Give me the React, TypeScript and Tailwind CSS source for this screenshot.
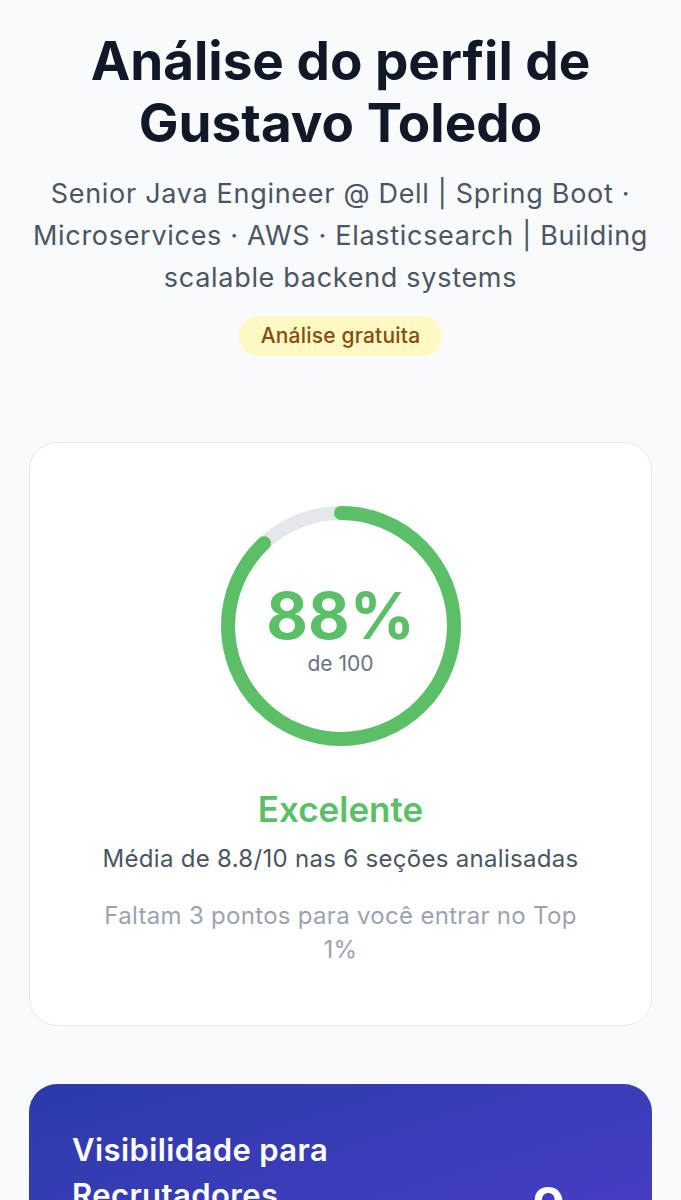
import React from "react";

const GREEN = "#5bbf67";

function Ring() {
  const r = 113;
  const c = 2 * Math.PI * r;
  const pct = 0.88;
  return (
    <div className="relative w-[240px] h-[240px]">
      <svg width="240" height="240" viewBox="0 0 240 240" className="block">
        <circle cx="120" cy="120" r={r} fill="none" stroke="#e5e7eb" strokeWidth="14" />
        <circle
          cx="120"
          cy="120"
          r={r}
          fill="none"
          stroke={GREEN}
          strokeWidth="14"
          strokeLinecap="round"
          strokeDasharray={`${c * pct} ${c}`}
          transform="rotate(-90 120 120)"
        />
      </svg>
      <div className="absolute inset-0 flex flex-col items-center justify-center pt-[8px]">
        <div className="text-[64px] leading-[64px] font-bold text-[#5bbf67]">88%</div>
        <div className="text-[21px] leading-[26px] text-[#6b7280] mt-[3px]">de 100</div>
      </div>
    </div>
  );
}

export default function App() {
  return (
    <div
      className="min-h-screen bg-[#f9fafb] px-[29px] pt-[30px] pb-[40px]"
      style={{ fontFamily: "Inter, 'Noto Sans', sans-serif" }}
    >
      <div className="flex flex-col items-center text-center">
        <h1 className="text-[53px] leading-[62px] font-bold text-[#111827]">
          Análise do perfil de Gustavo Toledo
        </h1>
        <p className="mt-[19px] text-[27px] leading-[42px] tracking-[0.7px] text-[#4b5563]">
          Senior Java Engineer @ Dell | Spring Boot · Microservices · AWS · Elasticsearch | Building scalable backend systems
        </p>
        <span className="mt-[17px] inline-flex items-center h-[40px] px-[22px] rounded-full bg-[#fef9c3] text-[#854d0e] text-[21px] tracking-[0.2px] font-medium">
          Análise gratuita
        </span>
      </div>

      <div className="mt-[86px] rounded-[28px] border border-[#e5e7eb] bg-white pt-[63px] pb-[58px] px-[40px] flex flex-col items-center text-center">
        <Ring />
        <div className="mt-[41px] text-[35px] leading-[44px] font-semibold text-[#5bbf67]">Excelente</div>
        <div className="mt-[11px] text-[24px] leading-[34px] tracking-[0.3px] text-[#4b5563]">
          Média de 8.8/10 nas 6 seções analisadas
        </div>
        <div className="mt-[23px] max-w-[500px] text-[24px] leading-[34px] tracking-[0.3px] text-[#9ca3af]">
          Faltam 3 pontos para você entrar no Top 1%
        </div>
      </div>

      <div className="mt-[58px] rounded-[28px] bg-linear-to-br from-[#2a3ba9] to-[#4b3ec9] p-[43px] flex items-start justify-between">
        <div className="max-w-[330px] text-[31px] leading-[45px] tracking-[0.4px] font-semibold text-white">
          Visibilidade para Recrutadores
        </div>
        <div className="mt-[50px] mr-[44px] text-[50px] leading-[56px] font-bold text-white">9</div>
      </div>
    </div>
  );
}
